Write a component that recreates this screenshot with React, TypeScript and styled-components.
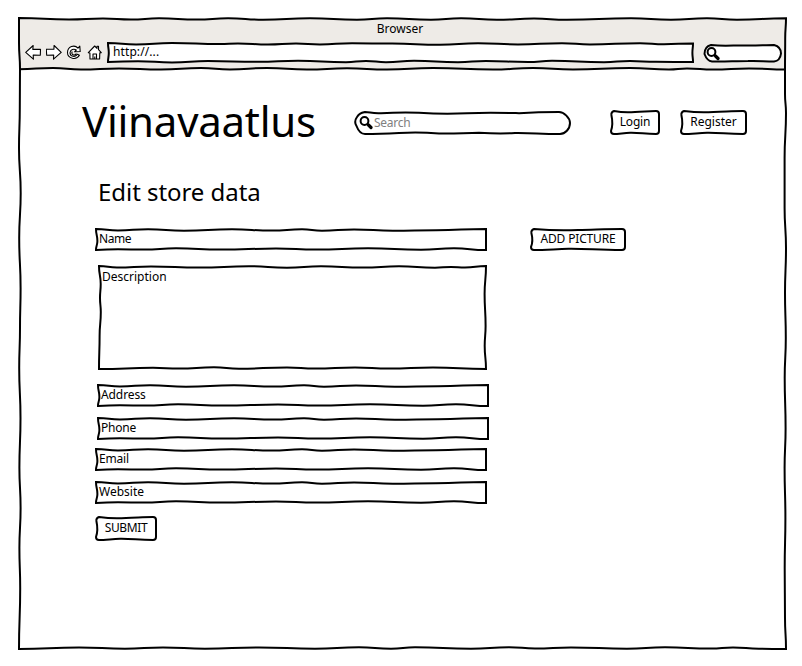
import React from "react";
import styled, { createGlobalStyle } from "styled-components";

const GlobalStyle = createGlobalStyle`
  *, *::before, *::after { box-sizing: border-box; }
  body {
    margin: 0;
    background: #fff;
    color: #000;
    font-family: "Noto Sans", "Open Sans", sans-serif;
    font-size: 12px;
    line-height: 16px;
  }
`;

/* ---------- hand-drawn outlines ---------- */

type Knot = [number, number];

const across = (k: Knot[]) =>
  k.slice(1).map(([x, y], i) => {
    const [px, py] = k[i];
    const m = (px + x) / 2;
    return `C${m} ${py} ${m} ${y} ${x} ${y}`;
  }).join("");

const down = (k: Knot[]) =>
  k.slice(1).map(([x, y], i) => {
    const [px, py] = k[i];
    const m = (py + y) / 2;
    return `C${px} ${m} ${x} ${m} ${x} ${y}`;
  }).join("");

const outline = (top: Knot[], right: Knot[], bottom: Knot[], left: Knot[]) =>
  `M${top[0].join(" ")}${across(top)}${down(right)}${across([...bottom].reverse())}${down([...left].reverse())}Z`;

const fieldPath = outline(
  [[0, 0], [22, 1.4], [52, 0.2], [88, 1.7], [136, 0.2], [176, 1.6], [206, 0.3], [226, 1.7], [258, 0.4], [297, 1.7], [340, 1.2], [390, 0]],
  [[390, 0], [390, 21]],
  [[0, 21], [22, 20.2], [48, 20.6], [80, 19.2], [125, 20.6], [180, 19.6], [220, 20.6], [272, 19.2], [325, 20.7], [358, 19.3], [390, 21]],
  [[0, 0], [1.4, 12], [0, 21]],
);

const areaPath = outline(
  [[0, 0], [18, 1.6], [52, 0.4], [100, 1.6], [150, 0.2], [188, 1.7], [222, 0.2], [264, 1.6], [300, 0.3], [336, 1.7], [352, 1], [366, 1.5], [387, 0]],
  [[387, 0], [385.6, 28], [386.6, 60], [385.7, 80], [387, 103]],
  [[0, 103], [54, 101.8], [80, 102.6], [115, 101.3], [140, 102.7], [188, 101.5], [216, 102.5], [256, 101.4], [290, 102.6], [334, 101.5], [387, 103]],
  [[0, 0], [1.7, 18], [1, 32], [1.8, 46], [0.6, 70], [0, 103]],
);

const addressBarPath = outline(
  [[0, 0], [28, 1.4], [64, 0], [112, 1], [130, 0.4], [160, 1.6], [188, 0.6], [212, 1.5], [244, 0.2], [284, 0.6], [332, 1.8], [370, 0.3], [410, 1.4], [454, 0.2], [482, 1.5], [532, 0.2], [556, 1.3], [585, 0.4]],
  [[585, 0.4], [584.4, 10], [585, 19]],
  [[0, 19], [30, 18.2], [64, 19.4], [100, 18], [150, 18.8], [190, 17.7], [238, 19.2], [258, 18], [278, 19.2], [306, 17.7], [350, 19.2], [378, 18], [420, 19], [444, 17.8], [496, 19.2], [522, 18], [548, 18.8], [585, 19]],
  [[0, 0], [0.8, 10], [0, 19]],
);

const windowPath = outline(
  [[0, 0], [50, 1.6], [84, 0.6], [112, 1.6], [140, 0.2], [178, 1.6], [209, 0.2], [244, 1.7], [291, 0.2], [338, 1.7], [368, 0.2], [412, 1.8], [442, 0.2], [478, 1.8], [515, 0.6], [548, 1.8], [612, 0.2], [652, 1.8], [688, 0.3], [718, 1.8], [767, 0.2]],
  [[767, 0.2], [766.2, 20], [766, 51], [766, 76], [767, 95], [765.6, 140], [765.6, 190], [767, 230], [766, 275], [766.8, 320], [765.7, 360], [766.6, 410], [765.6, 450], [766.4, 500], [765.7, 550], [766, 600], [767, 631]],
  [[0, 631], [60, 629.5], [106, 630.7], [144, 629.4], [186, 630.7], [240, 629.4], [296, 630.7], [340, 629.2], [372, 630.7], [396, 629.2], [452, 630.8], [490, 629.2], [516, 630.5], [552, 629.4], [608, 630.8], [646, 629.2], [692, 630.6], [714, 629.4], [740, 630.8], [767, 631]],
  [[0, 0], [0, 25], [1, 51], [0.8, 90], [0, 130], [1.7, 175], [0.2, 220], [1.6, 270], [1, 310], [0.2, 350], [1.5, 400], [0.4, 450], [1.6, 490], [0.4, 530], [1.2, 570], [0, 631]],
);

const toolbarEdge = `M0 51.2${across([[0, 51.2], [34, 50], [62, 51.6], [100, 50.4], [142, 51.4], [182, 50], [211, 51.5], [248, 50], [288, 51.6], [328, 50.3], [368, 51.5], [414, 50], [474, 51.6], [514, 50], [554, 51.5], [611, 50], [650, 51.5], [668, 50.5], [694, 51.6], [730, 50.4], [767, 51.4]])}`;

const buttonPath = (w: number, h: number) =>
  `M3 0C${w * 0.25} 1.8 ${w * 0.35} 1.7 ${w * 0.5} 1C${w * 0.7} 0.6 ${w * 0.8} 0 ${w - 3} 0Q${w} 0 ${w} 3V${h - 3}Q${w} ${h} ${w - 3} ${h}C${w * 0.7} ${h} ${w * 0.6} ${h - 1.4} ${w * 0.4} ${h - 1.2}C${w * 0.25} ${h - 0.8} ${w * 0.15} ${h} 3 ${h}Q0 ${h} 0 ${h - 3}C1.8 ${h * 0.65} 1.5 ${h * 0.4} 0.4 4Q0 1 3 0Z`;

const searchPath =
  "M10 0C16 .2 16 1.6 26 1.2C40 .4 52 .4 64 .7C80 1.8 96 2 112 1.2C134 .2 150 .8 164 1.2C180 .2 196 0 204 0C209 0 215 6 215 11C215 17 210 22 205 22C184 22 178 20.8 160 21C146 21.8 140 21.6 124 20.8C108 21 98 21.8 84 21.4C66 20.2 56 20.4 44 21C30 21.7 20 22 10 22C5 22 3 18 1.5 14C-.4 11 -.2 8 2 5C4 1.5 6 1 10 0Z";

const miniSearchPath =
  "M7 0C20 1.5 28 .4 38 .4C50 1 60 0 70 0C74 1 77 4 77 8.5C76.5 13 74 16 70 16.5C60 16.5 54 15.5 44 16C30 16 20 17 8 16.5C4 16 2 13 .5 9C.5 4 3 1 7 0Z";

const Drawing = styled.svg`
  position: absolute;
  inset: 0;
  width: 100%;
  height: 100%;
  overflow: visible;
  pointer-events: none;
`;

const Outline = ({ d, fill = "#fff" }: { d: string; fill?: string }) => (
  <Drawing aria-hidden="true">
    <path d={d} fill={fill} stroke="#000" strokeWidth="2" strokeLinejoin="miter" />
  </Drawing>
);

/* ---------- parts ---------- */

const Page = styled.div`
  width: 802px;
  height: 666px;
  padding: 18px 0 0 19px;
`;

const BrowserWindow = styled.main`
  position: relative;
  width: 767px;
  height: 631px;
`;

const Chrome = styled.header`
  position: relative;
  height: 51px;
`;

const WindowTitle = styled.div`
  position: relative;
  padding: 3px 5px 0 0;
  height: 24.5px;
  text-align: center;
`;

const Toolbar = styled.div`
  position: relative;
  display: flex;
  align-items: flex-start;
  padding-left: 6px;
`;

const NavIcons = styled.div`
  display: flex;
  gap: 4px;
  width: 83px;
  padding-top: 1px;
`;

const NavIcon = styled.svg`
  flex: none;
  width: 16.5px;
  height: 17px;
  fill: #fff;
  stroke: #000;
  stroke-width: 1.1;
  stroke-linejoin: round;
`;

const AddressBar = styled.div`
  position: relative;
  width: 585px;
  height: 19px;
  padding: 1px 5px;
  line-height: 15px;
`;

const MiniSearch = styled.div`
  position: relative;
  display: flex;
  width: 77px;
  height: 17px;
  margin: 2px 0 0 10.5px;
  padding: 2.5px 0 0 2.5px;
`;

const Caption = styled.span<{ $spacing?: number }>`
  position: relative;
  letter-spacing: ${(p) => p.$spacing ?? 0}px;
`;

const Glass = styled.svg`
  position: relative;
  flex: none;
  width: 14px;
  height: 14px;
  fill: none;
  stroke: #000;
`;

const SiteHeader = styled.div`
  position: relative;
  display: flex;
  align-items: flex-start;
  height: 107px;
  padding: 42px 0 0 63px;
`;

const Brand = styled.h1`
  width: 273px;
  margin: -20px 0 0;
  font-size: 42px;
  font-weight: 400;
  line-height: 60px;
  letter-spacing: -0.25px;
`;

const SearchBox = styled.div`
  position: relative;
  display: flex;
  gap: 1.5px;
  width: 215px;
  height: 22px;
  margin: 1px 41px 0 0;
  padding: 3px 0 0 3.5px;
  color: #808080;

  & > ${Glass} { margin-top: 1px; }
`;

const SketchButton = styled.button<{ $w: number; $h: number }>`
  position: relative;
  width: ${(p) => p.$w}px;
  height: ${(p) => p.$h}px;
  padding: 0 0 2px;
  border: 0;
  background: none;
  color: #000;
  font: inherit;
  line-height: 18px;
  white-space: nowrap;
  & + & { margin-left: 22px; }
`;

const Content = styled.section`
  position: relative;
  padding-left: 77px;
`;

const Heading = styled.h2`
  height: 53px;
  margin: 0 0 0 2px;
  font-size: 24px;
  font-weight: 400;
  line-height: 32px;
  letter-spacing: -0.05px;
`;

const Columns = styled.div`
  display: flex;
  gap: 43px;
`;

const Form = styled.form`
  display: flex;
  flex-direction: column;
  align-items: flex-start;
  width: 392px;
`;

const Field = styled.div<{ $gap: number; $indent?: number; $area?: boolean }>`
  position: relative;
  width: ${(p) => (p.$area ? 387 : 390)}px;
  height: ${(p) => (p.$area ? 103 : 21)}px;
  margin: 0 0 ${(p) => p.$gap}px ${(p) => p.$indent ?? 0}px;
  padding: ${(p) => (p.$area ? 3 : 2)}px 3px;
`;

const Magnifier = () => (
  <Glass viewBox="0 0 14 14" aria-hidden="true">
    <circle cx="5.5" cy="5" r="3.9" strokeWidth="2" />
    <path d="M8.2 7.8L9.8 9.3" strokeWidth="2" />
    <path d="M9.5 9L12 11.5" strokeWidth="3.2" strokeLinecap="round" />
  </Glass>
);

const Button = ({ w, h, label, spacing }: { w: number; h: number; label: string; spacing?: number }) => (
  <SketchButton type="button" $w={w} $h={h}>
    <Outline d={buttonPath(w, h)} />
    <Caption $spacing={spacing}>{label}</Caption>
  </SketchButton>
);

const fields = [
  { label: "Name", gap: 16, spacing: -0.4 },
  { label: "Description", gap: 16, indent: 3, area: true },
  { label: "Address", gap: 12, indent: 2, spacing: -0.1 },
  { label: "Phone", gap: 10, indent: 2, spacing: -0.2 },
  { label: "Email", gap: 12, spacing: -0.2 },
  { label: "Website", gap: 14 },
];

export default function App() {
  return (
    <>
      <GlobalStyle />
      <Page>
        <BrowserWindow>
          <Chrome>
            <Drawing aria-hidden="true">
              <path d="M1 1.5H766V51H1Z" fill="#eeebe7" />
              <path d={toolbarEdge} fill="none" stroke="#000" strokeWidth="2" />
            </Drawing>
            <WindowTitle>Browser</WindowTitle>
            <Toolbar>
              <NavIcons>
                <NavIcon viewBox="0 0 16.5 17">
                  <path d="M.7 8.3L8.2 1.5L7.8 5.4L15.5 5.2L15.3 11.2L8.2 11L8.4 15.2Z" />
                </NavIcon>
                <NavIcon viewBox="0 0 16.5 17">
                  <path d="M15.2 8.4L8.1 1.5L7.9 5.3L.3 5.2L.7 11.2L7.7 11L7.5 15.2Z" />
                </NavIcon>
                <NavIcon viewBox="0 0 16.5 17">
                  <path d="M13.8 2.2L14.2 7.5L8.6 7.8L10.3 6C7.8 4.2 4.2 5.7 4 8.7C4 12.6 9.3 13.8 11.4 10.3L13.4 11.3C10.4 16.5 1.5 14.8 1.5 8.6C1.7 2.500 8.3 .2 12 4.1Z" />
                  <path d="M6.2 7.5C4.7 10.8 8.7 12.1 10.5 9.7" fill="none" />
                </NavIcon>
                <NavIcon viewBox="0 0 16.5 17">
                  <path d="M1.3 8.6L7.7 2L10 4.3V2.3H11.500V5.7L14.3 8.7L12.8 8.9L12.6 15H3L2.900 9Z" />
                  <path d="M6 15V10H9.500V15M7.800 12.500V15" fill="none" />
                </NavIcon>
              </NavIcons>
              <AddressBar>
                <Outline d={addressBarPath} />
                <Caption $spacing={0.1}>http://...</Caption>
              </AddressBar>
              <MiniSearch>
                <Outline d={miniSearchPath} />
                <Magnifier />
              </MiniSearch>
            </Toolbar>
          </Chrome>

          <SiteHeader>
            <Brand>Viinavaatlus</Brand>
            <SearchBox>
              <Outline d={searchPath} />
              <Magnifier />
              <Caption $spacing={-0.25}>Search</Caption>
            </SearchBox>
            <Button w={48} h={23} label="Login" spacing={-0.2} />
            <Button w={65} h={23} label="Register" />
          </SiteHeader>

          <Content>
            <Heading>Edit store data</Heading>
            <Columns>
              <Form>
                {fields.map((f) => (
                  <Field key={f.label} $gap={f.gap} $indent={f.indent} $area={f.area}>
                    <Outline d={f.area ? areaPath : fieldPath} />
                    <Caption $spacing={f.spacing}>{f.label}</Caption>
                  </Field>
                ))}
                <Button w={60} h={23} label="SUBMIT" spacing={-0.4} />
              </Form>
              <Button w={94} h={21} label="ADD PICTURE" spacing={-0.15} />
            </Columns>
          </Content>
          <Outline d={windowPath} fill="none" />
        </BrowserWindow>
      </Page>
    </>
  );
}
